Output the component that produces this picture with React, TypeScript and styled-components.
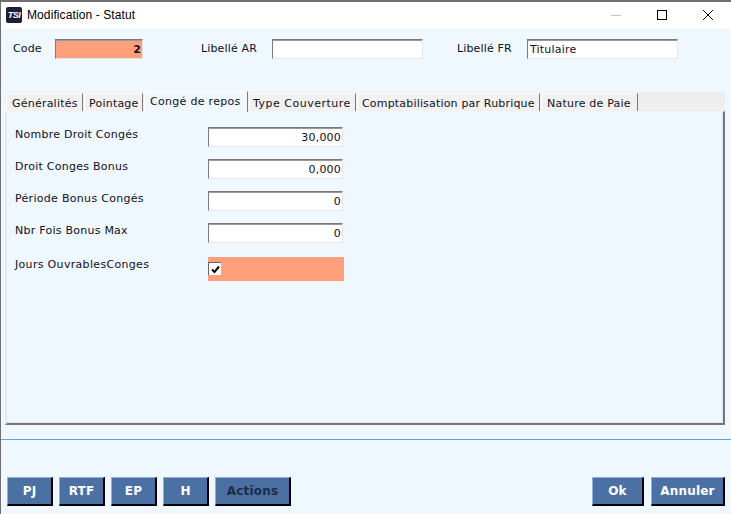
import styled, { createGlobalStyle } from 'styled-components';

const GlobalStyle = createGlobalStyle`
  html, body {
    margin: 0;
    padding: 0;
    background: #eff7ff;
  }
  * {
    box-sizing: border-box;
  }
`;

const Window = styled.div`
  width: 731px;
  height: 514px;
  overflow: hidden;
  display: flex;
  flex-direction: column;
  background: #eff7ff;
  border-top: 2px solid #6f6f6f;
  border-left: 1px solid #6f6f6f;
  font-family: 'DejaVu Sans', Verdana, sans-serif;
  font-size: 11px;
  color: #111122;
`;

const TitleBar = styled.div`
  height: 27px;
  flex: none;
  display: flex;
  align-items: center;
  background: #fff;
  padding: 0 0 2px 5px;
`;

const AppIcon = styled.div`
  width: 16px;
  height: 16px;
  background: #1e1e3c;
  border-radius: 2px;
  color: #fff;
  font: italic bold 9px/16px 'Liberation Sans', sans-serif;
  text-align: center;
  letter-spacing: -0.5px;
`;

const Title = styled.div`
  margin-left: 5px;
  flex: 1;
  font-family: 'Liberation Sans', Arial, sans-serif;
  font-size: 12px;
  color: #000;
  letter-spacing: 0.1px;
`;

const WinButton = styled.div`
  width: 46px;
  height: 25px;
  display: flex;
  align-items: center;
  justify-content: center;
`;

const HeaderRow = styled.div`
  display: flex;
  align-items: center;
  height: 20px;
  margin-top: 10px;
  padding-left: 12px;
`;

const Label = styled.div<{ $width: number }>`
  width: ${(p) => p.$width}px;
  flex: none;
  letter-spacing: 0.15px;
  margin-top: -1px;
`;

const Input = styled.div<{ $width: number; $bg?: string; $bold?: boolean; $right?: boolean }>`
  width: ${(p) => p.$width}px;
  height: 20px;
  flex: none;
  padding: 0 1px 0 2px;
  line-height: 19px;
  white-space: nowrap;
  text-align: ${(p) => (p.$right ? 'right' : 'left')};
  font-weight: ${(p) => (p.$bold ? 'bold' : 'normal')};
  background: ${(p) => p.$bg ?? '#fff'};
  border-style: solid;
  border-width: 1px;
  border-color: #7a7a7a #e6e6e6 #e6e6e6 #7a7a7a;
  box-shadow: inset 0 1px 0 #9a9a9a;
  letter-spacing: 0.2px;
`;

const Gap = styled.div<{ $width: number }>`
  width: ${(p) => p.$width}px;
  flex: none;
`;

const Tabs = styled.div`
  margin: 33px 6px 0 4px;
  height: 19px;
  flex: none;
  display: flex;
  align-items: flex-end;
  background: #eeeeee;
  padding-left: 1px;
`;

const Tab = styled.div<{ $active?: boolean; $width: number; $pad: number; $spacing?: number }>`
  width: ${(p) => p.$width}px;
  height: ${(p) => (p.$active ? 21 : 18)}px;
  flex: none;
  margin-right: 1px;
  padding: 3px 0 0 ${(p) => p.$pad}px;
  background: ${(p) => (p.$active ? '#eff7ff' : '#f1f1f1')};
  border-top: 1px solid #fff;
  border-left: 1px solid #fff;
  border-right: 1px solid #7a7a7a;
  white-space: nowrap;
  letter-spacing: ${(p) => p.$spacing ?? 0.22}px;
  position: relative;
  z-index: ${(p) => (p.$active ? 1 : 0)};
  margin-bottom: ${(p) => (p.$active ? '-1px' : '0')};
`;

const Panel = styled.div`
  margin: 0 6px 0 4px;
  height: 314px;
  flex: none;
  padding: 15px 0 0 8px;
  background: #eff7ff;
  border-style: solid;
  border-width: 1px 2px 2px 2px;
  border-color: #f4f4f4 #777 #777 #e8e8e8;
  box-shadow: inset 0 -1px 0 #e4e4e4, inset -1px 0 0 #e4e4e4;
  display: flex;
  flex-direction: column;
  gap: 12px;
`;

const FieldRow = styled.div`
  display: flex;
  height: 20px;
`;

const FieldLabel = styled.div<{ $spacing?: number }>`
  width: 193px;
  flex: none;
  padding-top: 1px;
  letter-spacing: ${(p) => p.$spacing ?? 0.25}px;
  line-height: 13px;
`;

const CheckRow = styled.div`
  display: flex;
  margin-top: 2px;
  height: 24px;
`;

const CheckArea = styled.div`
  width: 136px;
  height: 24px;
  background: #ff9f7b;
  display: flex;
  align-items: flex-start;
  padding-top: 5px;
`;

const CheckBox = styled.div`
  width: 13px;
  height: 13px;
  background: #fff;
  border-top: 1px solid #666;
  border-left: 1px solid #666;
  display: flex;
  align-items: center;
  justify-content: center;
`;

const Separator = styled.div`
  margin-top: 14px;
  height: 1px;
  flex: none;
  background: #5aa5ea;
`;

const Footer = styled.div`
  margin-top: 37px;
  padding: 0 6px;
  display: flex;
  justify-content: space-between;
`;

const ButtonGroup = styled.div<{ $gap: number }>`
  display: flex;
  gap: ${(p) => p.$gap}px;
`;

const ActionButton = styled.button<{ $width: number; $dark?: boolean }>`
  width: ${(p) => p.$width}px;
  height: 29px;
  flex: none;
  padding: 0;
  background: #4a70a4;
  border-style: solid;
  border-width: 1px 2px 2px 1px;
  border-color: #8fb0d8 #000 #000 #8fb0d8;
  color: ${(p) => (p.$dark ? '#1c2c44' : '#fff')};
  font-family: 'DejaVu Sans', Verdana, sans-serif;
  font-size: 12px;
  font-weight: bold;
  letter-spacing: 0.2px;
`;

export default function App() {
  return (
    <>
      <GlobalStyle />
      <Window>
        <TitleBar>
          <AppIcon>TSI</AppIcon>
          <Title>Modification - Statut</Title>
          <WinButton>
            <svg width="10" height="10" viewBox="0 0 10 10"><path d="M0 5.5h10" stroke="#c4c4c4" fill="none" /></svg>
          </WinButton>
          <WinButton>
            <svg width="10" height="10" viewBox="0 0 10 10"><rect x="0.5" y="0.5" width="9" height="9" stroke="#000" fill="none" /></svg>
          </WinButton>
          <WinButton>
            <svg width="10" height="10" viewBox="0 0 10 10"><path d="M0 0l10 10M10 0L0 10" stroke="#000" fill="none" /></svg>
          </WinButton>
        </TitleBar>
        <HeaderRow>
          <Label $width={42}>Code</Label>
          <Input $width={88} $bg="#ff9f7b" $bold $right>2</Input>
          <Gap $width={58} />
          <Label $width={71}>Libellé AR</Label>
          <Input $width={151} />
          <Gap $width={34} />
          <Label $width={70}>Libellé FR</Label>
          <Input $width={151}>Titulaire</Input>
        </HeaderRow>
        <Tabs>
          <Tab $width={77} $pad={5}>Généralités</Tab>
          <Tab $width={59} $pad={4}>Pointage</Tab>
          <Tab $active $width={104} $pad={5} $spacing={0.3}>Congé de repos</Tab>
          <Tab $width={107} $pad={3} $spacing={0.5}>Type Couverture</Tab>
          <Tab $width={183} $pad={4} $spacing={0.18}>Comptabilisation par Rubrique</Tab>
          <Tab $width={97} $pad={5}>Nature de Paie</Tab>
        </Tabs>
        <Panel>
          <FieldRow>
            <FieldLabel>Nombre Droit Congés</FieldLabel>
            <Input $width={135} $right>30,000</Input>
          </FieldRow>
          <FieldRow>
            <FieldLabel>Droit Conges Bonus</FieldLabel>
            <Input $width={135} $right>0,000</Input>
          </FieldRow>
          <FieldRow>
            <FieldLabel $spacing={0.3}>Période Bonus Congés</FieldLabel>
            <Input $width={135} $right>0</Input>
          </FieldRow>
          <FieldRow>
            <FieldLabel>Nbr Fois Bonus Max</FieldLabel>
            <Input $width={135} $right>0</Input>
          </FieldRow>
          <CheckRow>
            <FieldLabel $spacing={0.32}>Jours OuvrablesConges</FieldLabel>
            <CheckArea>
              <CheckBox>
                <svg width="9" height="9" viewBox="0 0 9 9"><path d="M1 4.5l2.5 2.5L8 1.5" stroke="#000" strokeWidth="2" fill="none" /></svg>
              </CheckBox>
            </CheckArea>
          </CheckRow>
        </Panel>
        <Separator />
        <Footer>
          <ButtonGroup $gap={6}>
            <ActionButton $width={46}>PJ</ActionButton>
            <ActionButton $width={46}>RTF</ActionButton>
            <ActionButton $width={46}>EP</ActionButton>
            <ActionButton $width={46}>H</ActionButton>
            <ActionButton $width={76} $dark>Actions</ActionButton>
          </ButtonGroup>
          <ButtonGroup $gap={7}>
            <ActionButton $width={52}>Ok</ActionButton>
            <ActionButton $width={74}>Annuler</ActionButton>
          </ButtonGroup>
        </Footer>
      </Window>
    </>
  );
}
